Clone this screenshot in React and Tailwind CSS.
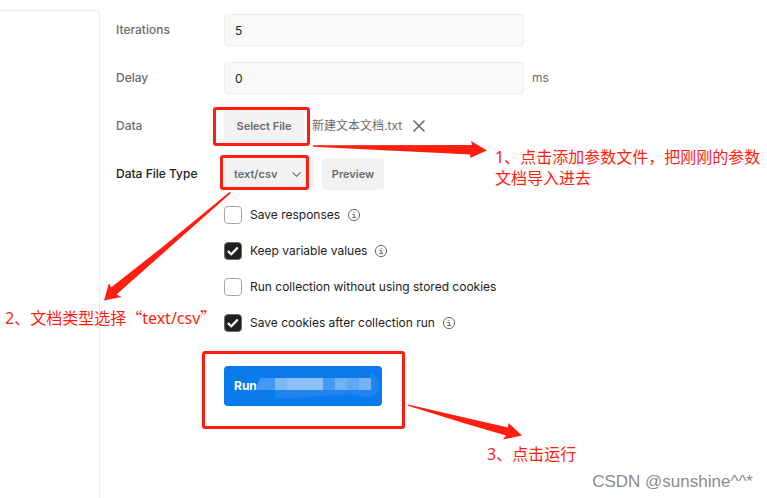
import React from 'react';
import { ChevronDown, X } from 'lucide-react';

const options = [
    { id: 'save-responses', label: 'Save responses', checked: false, info: true },
    { id: 'keep-values', label: 'Keep variable values', checked: true, info: true },
    { id: 'no-cookies', label: 'Run collection without using stored cookies', checked: false, info: false },
    { id: 'save-cookies', label: 'Save cookies after collection run', checked: true, info: true }
];

const InfoIcon = () => (
    <svg width="14" height="14" viewBox="0 0 14 14" fill="none" stroke="#6b6b6b" aria-hidden="true">
        <circle cx="7" cy="7" r="5.6" />
        <path d="M5.3 6.5H7.3V9.5M5.3 9.5H9" />
        <path d="M6.4 4.4H7.7" />
    </svg>
);

const Field = ({ id, label, value, unit }) => (
    <div className="flex items-center">
        <label htmlFor={id} className="w-[108px] shrink-0 font-medium text-[#6b6b6b]">{label}</label>
        <input
            id={id}
            type="text"
            defaultValue={value}
            className="h-8 w-full max-w-[300px] min-w-0 rounded border border-[#ededed] bg-[#f9f9f9] px-2.5 text-[#212121]"
        />
        {unit && <span className="ml-2 text-[#6b6b6b]">{unit}</span>}
    </div>
);

const Option = ({ option }) => (
    <div className="flex h-[18px] items-center">
        <span className="relative mr-2 flex h-[18px] w-[18px]">
            <input
                id={option.id}
                type="checkbox"
                defaultChecked={option.checked}
                className="peer h-[18px] w-[18px] appearance-none rounded border border-[#a6a6a6] bg-white checked:border-[#6b6b6b] checked:bg-[#212121]"
            />
            <svg
                viewBox="0 0 18 18"
                className="pointer-events-none absolute inset-0 hidden peer-checked:block"
                fill="none"
                stroke="white"
                strokeWidth="2.2"
                aria-hidden="true"
            >
                <path d="M3.8 9L7.3 12.2L13.8 5.6" />
            </svg>
        </span>
        <label htmlFor={option.id} className="mr-[7px] text-[#212121]">{option.label}</label>
        {option.info && <InfoIcon />}
    </div>
);

const Mosaic = () => (
    <svg width="123" height="28" viewBox="0 0 123 28" className="shrink-0" aria-hidden="true">
        <path d="M113 1Q122 6 122 13Q121 24 112 25H106Q101 23 98 22L60 24L41 26H18V18H113Z" fill="#1f83f0" />
        <path d="M4 6H18V18H0Q0 10 4 6Z" fill="#4499f4" />
        <path d="M18 6H30V18H18Z" fill="#7cb7f8" />
        <path d="M30 6H66V18H30Z" fill="#8cc0f9" />
        <path d="M66 6H78V18H66Z" fill="#4499f4" />
        <path d="M78 6H90V18H78Z" fill="#71b1f8" />
        <path d="M90 6H102V18H90Z" fill="#60a8f6" />
        <path d="M102 6H114V18H102Z" fill="#76b4f8" />
    </svg>
);

// Hand-drawn style marks that sit on top of the form
const Annotations = () => (
    <div className="pointer-events-none absolute inset-0 font-['Noto_Sans','Noto_Sans_CJK_SC',sans-serif] text-base leading-[21px] text-[#ff1e10]">
        <div className="absolute top-[107px] left-[213px] h-[39px] w-[97px] rounded-[3px] border-3 border-[#ff1e10]" />
        <div className="absolute top-[155px] left-[220px] h-[35px] w-[89px] rounded-[3px] border-3 border-[#ff1e10]" />
        <div className="absolute top-[351px] left-[202px] h-[78px] w-[203px] rounded-[3px] border-3 border-[#ff1e10]" />
        <svg width="767" height="498" viewBox="0 0 767 498" className="absolute top-0 left-0" fill="#ff1e10" aria-hidden="true">
            <path d="M313 145.2L472 145L471 141L487 150.5L470 158L470.5 154.5L313 146.7Z" />
            <path d="M229.5 192L231 193L116.5 294.5L121.5 297L104 300.5L109 283L111 287.5L160 249Z" />
            <path d="M408 404.5L508 427.5L508.5 423L522 435.5L503 439.5L506 435.5L465 423.5L408 405.7Z" />
        </svg>
        <p className="absolute top-[147px] left-[495px] w-[272px]">1、点击添加参数文件，把刚刚的参数文档导入进去</p>
        <p className="absolute top-[307px] left-[5px] whitespace-nowrap">
            2、文档类型选择
            <span lang="zh-CN" className="font-['Noto_Sans_CJK_SC',sans-serif]">“</span>
            text/csv
            <span lang="zh-CN" className="font-['Noto_Sans_CJK_SC',sans-serif]">”</span>
        </p>
        <p className="absolute top-[444px] left-[487px] whitespace-nowrap">3、点击运行</p>
    </div>
);

const App = () => {
    return (
        <div className="relative flex min-h-screen w-full overflow-hidden bg-white font-[Inter,sans-serif] text-xs">
            <aside className="mt-2.5 w-[100px] shrink-0 rounded-tr border-t border-r border-[#ededed]" />

            <main className="min-w-0 flex-1 px-4 pt-3.5">
                <form className="flex flex-col gap-4" onSubmit={(e) => e.preventDefault()}>
                    <Field id="iterations" label="Iterations" value="5" />
                    <Field id="delay" label="Delay" value="0" unit="ms" />

                    <div className="flex items-center">
                        <span className="w-[108px] shrink-0 font-medium text-[#6b6b6b]">Data</span>
                        <button type="button" className="h-8 w-20 rounded bg-[#f2f2f2] text-[11px] font-semibold text-[#6b6b6b]">
                            Select File
                        </button>
                        <span className="ml-2 font-[Inter,'Noto_Sans_CJK_SC',sans-serif] text-[#6b6b6b]">新建文本文档.txt</span>
                        <button type="button" aria-label="Remove file" className="ml-[7px] text-[#6b6b6b]">
                            <X size={20} />
                        </button>
                    </div>

                    <div className="flex items-center">
                        <label htmlFor="file-type" className="w-[108px] shrink-0 font-medium text-[#212121]">Data File Type</label>
                        <div className="relative">
                            <select
                                id="file-type"
                                defaultValue="text/csv"
                                className="h-8 w-[90px] appearance-none rounded bg-[#f2f2f2] pl-2.5 text-[11px] font-semibold text-[#6b6b6b]"
                            >
                                <option>text/csv</option>
                                <option>application/json</option>
                            </select>
                            <ChevronDown size={15} strokeWidth={1.7} className="pointer-events-none absolute top-[9px] right-[10px] text-[#6b6b6b]" />
                        </div>
                        <button type="button" className="ml-2 h-8 w-[62px] rounded bg-[#f2f2f2] text-[11px] font-semibold text-[#6b6b6b]">
                            Preview
                        </button>
                    </div>

                    <div className="ml-[108px] flex flex-col gap-[18px]">
                        {options.map((option) => <Option key={option.id} option={option} />)}
                    </div>

                    <button
                        type="submit"
                        className="mt-[18px] ml-[108px] flex h-10 w-[158px] items-center rounded bg-[#097bed] pl-2.5 font-bold text-white"
                    >
                        Run
                        <Mosaic />
                    </button>
                </form>
            </main>

            <Annotations />
            <p className="absolute right-3.5 bottom-1 font-['Liberation_Sans',sans-serif] text-[17px] leading-6 text-[#8c8c8c]">CSDN @sunshine^^*</p>
        </div>
    );
};

export default App;
